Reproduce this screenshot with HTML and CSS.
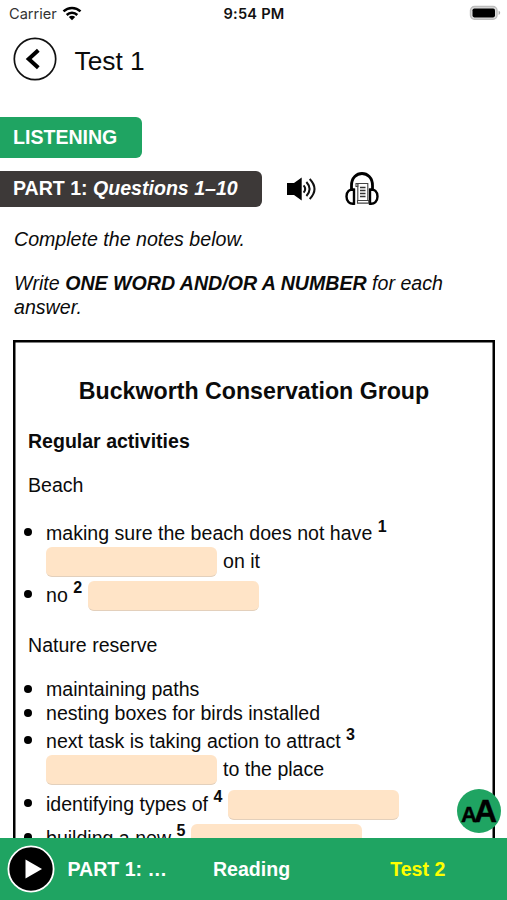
FILE: index.html
```html
<!DOCTYPE html>
<html lang="en">
<head>
<meta charset="utf-8">
<title>Test 1</title>
<link rel="stylesheet" href="styles.css">
</head>
<body>
<div class="app">
  <div class="status">
    <div class="carrier">Carrier
      <svg width="20" height="15" viewBox="0 0 20 15"><g fill="none" stroke="#000" stroke-width="2.5"><path d="M1.500 5.400a12.200 12.200 0 0 1 17 0"/><path d="M4.700 9a7.500 7.500 0 0 1 10.600 0"/></g><path d="M10 14.300 6.800 11a4.600 4.600 0 0 1 6.400 0z"/></svg>
    </div>
    <div class="time">9:54 PM</div>
    <svg class="battery" width="32" height="16" viewBox="0 0 32 16"><rect x="1.500" y="1.500" width="26.500" height="12.800" rx="4" fill="#ddd" stroke="#bdbdbd" stroke-width="1.400"/><rect x="3.500" y="3.400" width="22.500" height="9" rx="1.800"/><path d="M29.600 5.700q1.600.7 1.600 2.100t-1.600 2.100z" fill="#aaa"/></svg>
  </div>
  <header class="head">
    <svg width="44" height="44" viewBox="0 0 44 44" fill="none" stroke="#111"><circle cx="22" cy="22" r="20.700" stroke-width="1.700"/><path d="M25.300 13.200 15.700 22l9.600 8.800" stroke="#000" stroke-width="4"/></svg>
    <h1>Test 1</h1>
  </header>
  <main class="content">
    <div class="tag">LISTENING</div>
    <div class="part">
      <div class="part-name">PART 1: <i>Questions 1–10</i></div>
      <svg class="speaker" width="30" height="24" viewBox="0 0 30 24"><path d="M0 6h7L14.700.5v23L7 18H0z"/><g fill="none" stroke="#111" stroke-width="2"><path d="M16.600 8.300q3.200 3.700 0 7.400"/><path d="M19.400 5q6.400 7 0 14"/><path d="M22.700 2q9.600 10 0 20"/></g></svg>
      <svg class="phones" width="34" height="34" viewBox="0 0 34 34" fill="none" stroke="#000"><path d="M6.500 17v-3.500C6.500-2.500 27.500-2.500 27.500 13.500V17" stroke-width="2.800"/><path d="M9 17.500v14.200c-4.500.5-7.500-2.200-7.500-7.200s3-7.500 7.500-7zM25 17.500v14.200c4.500.5 7.500-2.200 7.500-7.200s-3-7.500-7.500-7z" stroke-width="2.400"/><path d="M12.800 11.500h10v17.500M12.800 11.500v17M11 11.500h2v3h-2zM12.500 28.500h11.300v2.600H12.500z" stroke="#444" stroke-width="1.100"/><path d="M15 15.500h5.500M15 18.500h5.500M15 21.500h5.500M15 24.500h5.500" stroke="#333" stroke-width="1.400"/></svg>
    </div>
    <p class="lead">Complete the notes below.</p>
    <p class="lead second">Write <b>ONE WORD AND/OR A NUMBER</b> for each<br>answer.</p>
    <section class="notes">
      <h2>Buckworth Conservation Group</h2>
      <h3>Regular activities</h3>
      <p class="topic">Beach</p>
      <ul>
        <li><div class="line over">making sure the beach does not have <sup>1</sup></div><div class="line field"><span class="blank"></span><span>on it</span></div></li>
        <li><div class="line field">no <sup>2</sup><span class="blank"></span></div></li>
      </ul>
      <p class="topic nature">Nature reserve</p>
      <ul>
        <li><div class="line">maintaining paths</div></li>
        <li><div class="line">nesting boxes for birds installed</div></li>
        <li class="shift"><div class="line over">next task is taking action to attract <sup>3</sup></div><div class="line field"><span class="blank"></span><span>to the place</span></div></li>
        <li><div class="line field">identifying types of <sup>4</sup><span class="blank"></span></div></li>
        <li><div class="line field">building a new <sup>5</sup><span class="blank"></span></div></li>
      </ul>
    </section>
  </main>
  <footer class="bar">
    <svg width="48" height="48" viewBox="0 0 48 48"><circle cx="24" cy="24" r="22.600" stroke="#fff" stroke-width="1.800"/><path d="M18.500 14.500v19L35 24z" fill="#fff"/></svg>
    <div class="now">PART 1: …</div>
    <div class="reading">Reading</div>
    <div class="next">Test 2</div>
  </footer>
  <div class="size"><span class="small">A</span><span class="big">A</span></div>
</div>
</body>
</html>
```
FILE: styles.css
```css
* { box-sizing: border-box; }
body { margin: 0; background: #fff; color: #0b0b0b; font: 19.57px "Liberation Sans", Arial, sans-serif; }
h1, h2, h3, p, ul { margin: 0; padding: 0; }
svg { display: block; flex: none; }
.app { position: relative; width: 507px; height: 900px; overflow: hidden; display: flex; flex-direction: column; white-space: nowrap; }
.status { height: 28px; flex: none; display: grid; grid-template-columns: 1fr 1fr 1fr; align-items: center; padding: 0 6px 0 9px; font: 14.6px Inter, sans-serif; color: #333; }
.carrier { display: flex; gap: 5px; align-items: center; }
.carrier svg { margin-top: -2px; }
.time { text-align: center; font-weight: 600; color: #111; letter-spacing: .2px; margin-left: -2px; }
.battery { justify-self: end; margin-top: -2px; }
.head { height: 89px; flex: none; display: flex; align-items: flex-start; gap: 18px; padding: 9px 12px; }
.head svg { margin-left: .5px; }
h1 { font-size: 26.3px; font-weight: 400; line-height: 44px; padding-top: 2px; }
.content { flex: 1; min-height: 0; overflow: hidden; }
.tag { width: 142px; height: 41px; padding-left: 13px; background: #1fa462; color: #fff; border-radius: 0 6px 6px 0; font-weight: 700; line-height: 41px; }
.part { display: flex; align-items: center; height: 36px; margin-top: 13px; }
.part-name { width: 262px; height: 36px; padding-left: 13px; background: #3d3938; color: #fff; border-radius: 0 6px 6px 0; font-weight: 700; line-height: 35px; }
.speaker { margin-left: 25px; }
.phones { margin-left: 28px; }
.lead { margin: 20px 0 0 14px; font-size: 19.6px; font-style: italic; line-height: 24.5px; }
.lead.second { margin-top: 19px; }
.notes { width: 482px; height: 600px; margin: 20px 0 0 13px; padding: 35px 13px 0; border: 2px solid #000; box-shadow: inset 0 0 0 .5px #000; }
h2 { font-size: 23.2px; line-height: 28px; text-align: center; }
h3 { font-size: 19.55px; line-height: 24px; margin: 24px 0 20px; }
.topic { line-height: 24px; margin-bottom: 22px; }
.topic.nature { margin: 22px 0 20px; }
ul { list-style: none; padding-left: 18px; }
li { position: relative; }
li::before { content: ""; position: absolute; left: -22px; top: 8px; width: 8px; height: 8px; border-radius: 50%; background: #000; }
.line { line-height: 24px; white-space: pre; }
.line.over { line-height: 28px; height: 28px; }
.line.field { display: flex; height: 30px; line-height: 28px; margin-bottom: 4px; }
li:has(.over)::before, li:has(.field)::before { top: 9px; }
.shift { margin-top: 2px; }
.shift .field { margin-bottom: 5px; }
.blank { width: 171px; height: 30px; margin-right: 6px; border-radius: 6px; background: #ffe4c7; border-bottom: 1px solid #e3d0bc; }
sup { font-size: 16px; font-weight: 700; line-height: 0; vertical-align: baseline; position: relative; top: -8px; }
.field sup { line-height: 28px; margin-right: 6px; top: -7px; }
.bar { height: 62px; flex: none; display: grid; grid-template-columns: 60.5px 98px 163px 1fr; align-items: center; padding-left: 7px; background: #1fa462; color: #fff; font-weight: 700; }
.reading { text-align: center; margin-left: 9px; }
.next { text-align: center; color: #ffff00; }
.size { position: absolute; left: 457px; top: 789px; width: 44px; height: 44px; border-radius: 50%; background: #1fa462; display: flex; justify-content: center; align-items: baseline; color: #000; font-weight: 700; line-height: 44px; }
.small { font-size: 22px; -webkit-text-stroke: .4px #000; }
.big { font-size: 32px; margin-left: -3px; -webkit-text-stroke: .4px #000; }
```
